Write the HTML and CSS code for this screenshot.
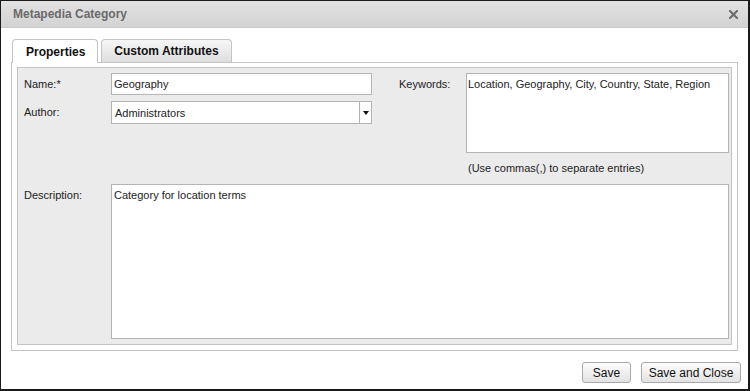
FILE: index.html
```html
<!DOCTYPE html>
<html lang="en">
<head>
    <meta charset="UTF-8">
    <title>Metapedia Category</title>
    <link rel="stylesheet" href="styles.css">
</head>
<body>
    <div class="dialog">
        <header class="dialog-header">
            <h1>Metapedia Category</h1>
            <svg class="close" width="9" height="9" viewBox="0 0 9 9">
                <path d="M1 1 L8 8 M8 1 L1 8" stroke="#6e6e6e" stroke-width="2.2" stroke-linecap="square"/>
            </svg>
        </header>

        <div class="tabs">
            <div class="tab active">Properties</div>
            <div class="tab">Custom Attributes</div>
        </div>

        <div class="tab-panel">
            <div class="fields">
                <div class="top">
                    <div class="left-col">
                        <label class="field-label">Name:*</label>
                        <div class="input-field">Geography</div>
                        <label class="field-label">Author:</label>
                        <div class="select-field">
                            <span class="select-value">Administrators</span>
                            <span class="select-arrow"></span>
                        </div>
                    </div>
                    <div class="right-col">
                        <label class="field-label">Keywords:</label>
                        <div>
                            <div class="textarea-field keywords">Location, Geography, City, Country, State, Region</div>
                            <p class="hint">(Use commas(,) to separate entries)</p>
                        </div>
                    </div>
                </div>
                <div class="desc-row">
                    <label class="field-label">Description:</label>
                    <div class="textarea-field description">Category for location terms</div>
                </div>
            </div>
        </div>

        <div class="dialog-actions">
            <button class="btn btn-save">Save</button>
            <button class="btn btn-wide">Save and Close</button>
        </div>
    </div>
</body>
</html>
```

FILE: styles.css
```css
:root {
    --text: #222;
    --border: #c4c4c4;
    --field-border: #b4b4b4;
    --panel-bg: #ebebeb;
}

* {
    box-sizing: border-box;
    margin: 0;
    padding: 0;
}

body {
    font-family: 'Liberation Sans', Arial, sans-serif;
    font-size: 11px;
    color: var(--text);
    background: #fff;
}

.dialog {
    width: 750px;
    height: 391px;
    border: 1px solid #1a1a1a;
    border-right-width: 2px;
    border-bottom-width: 2px;
    background: #fff;
    display: flex;
    flex-direction: column;
}

.dialog-header {
    height: 27px;
    display: flex;
    align-items: center;
    justify-content: space-between;
    padding: 0 10px 0 12px;
    background: linear-gradient(#e2e2e2, #d3d3d3);
    border-bottom: 1px solid #c8c8c8;
}

h1 {
    font-size: 12px;
    font-weight: bold;
    color: #6a6a6a;
}

.close {
    display: block;
    margin-top: 1px;
}

.tabs {
    display: flex;
    gap: 3px;
    padding: 11px 0 0 11px;
    position: relative;
    z-index: 1;
}

.tab {
    height: 23px;
    padding: 0 12px;
    display: flex;
    align-items: center;
    font-size: 12px;
    font-weight: bold;
    color: #111;
    border: 1px solid var(--border);
    border-bottom: none;
    border-radius: 4px 4px 0 0;
    background: linear-gradient(#f6f6f6, #dedede);
}

.tab.active {
    height: 24px;
    padding: 0 12px 0 13px;
    background: #fff;
}

.tab-panel {
    margin: -1px 10px 0 10px;
    height: 289px;
    border: 1px solid var(--border);
    padding: 4px 5px 5px 5px;
}

.fields {
    height: 100%;
    border: 1px solid var(--border);
    background: var(--panel-bg);
    padding: 5px 3px 0 6px;
}

.top {
    display: flex;
}

.left-col {
    display: grid;
    grid-template-columns: 87px 261px;
    grid-template-rows: 22px 23px;
    row-gap: 6px;
    align-content: start;
}

.right-col {
    display: grid;
    grid-template-columns: 67px 263px;
    margin-left: 27px;
    align-items: start;
}

.field-label {
    padding-top: 4px;
    line-height: 14px;
}

.input-field,
.select-field,
.textarea-field {
    background: #fff;
    border: 1px solid var(--field-border);
    line-height: 14px;
}

.input-field {
    padding: 3px 2px;
}

.select-field {
    display: flex;
    justify-content: space-between;
}

.select-value {
    padding: 4px 3px;
}

.select-arrow {
    width: 12px;
    border-left: 1px solid var(--field-border);
    position: relative;
}

.select-arrow::after {
    content: "";
    position: absolute;
    left: 3px;
    top: 9px;
    border-left: 3px solid transparent;
    border-right: 3px solid transparent;
    border-top: 4px solid #111;
}

.textarea-field {
    padding: 3px 1px;
}

.keywords {
    height: 80px;
}

.hint {
    margin-top: 8px;
    padding-left: 2px;
    line-height: 14px;
}

.desc-row {
    display: grid;
    grid-template-columns: 87px 618px;
    margin-top: 9px;
}

.description {
    height: 155px;
    padding: 3px 2px;
}

.dialog-actions {
    display: flex;
    justify-content: flex-end;
    gap: 10px;
    padding: 11px 7px 0 0;
}

.btn {
    height: 21px;
    font-family: inherit;
    font-size: 12px;
    color: #111;
    white-space: nowrap;
    border: 1px solid #a9a9a9;
    border-radius: 3px;
    background: linear-gradient(#fdfdfd, #e2e2e2);
}

.btn-save {
    width: 49px;
}

.btn-wide {
    width: 100px;
}
```
